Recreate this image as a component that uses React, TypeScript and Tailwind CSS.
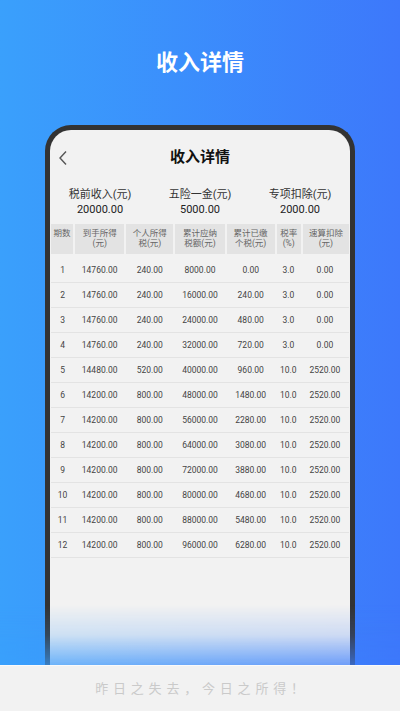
const rows = [
  ["1", "14760.00", "240.00", "8000.00", "0.00", "3.0", "0.00"],
  ["2", "14760.00", "240.00", "16000.00", "240.00", "3.0", "0.00"],
  ["3", "14760.00", "240.00", "24000.00", "480.00", "3.0", "0.00"],
  ["4", "14760.00", "240.00", "32000.00", "720.00", "3.0", "0.00"],
  ["5", "14480.00", "520.00", "40000.00", "960.00", "10.0", "2520.00"],
  ["6", "14200.00", "800.00", "48000.00", "1480.00", "10.0", "2520.00"],
  ["7", "14200.00", "800.00", "56000.00", "2280.00", "10.0", "2520.00"],
  ["8", "14200.00", "800.00", "64000.00", "3080.00", "10.0", "2520.00"],
  ["9", "14200.00", "800.00", "72000.00", "3880.00", "10.0", "2520.00"],
  ["10", "14200.00", "800.00", "80000.00", "4680.00", "10.0", "2520.00"],
  ["11", "14200.00", "800.00", "88000.00", "5480.00", "10.0", "2520.00"],
  ["12", "14200.00", "800.00", "96000.00", "6280.00", "10.0", "2520.00"],
];

const headers = [
  ["期数"],
  ["到手所得", "(元)"],
  ["个人所得", "税(元)"],
  ["累计应纳", "税额(元)"],
  ["累计已缴", "个税(元)"],
  ["税率", "(%)"],
  ["速算扣除", "(元)"],
];

const summary = [
  { label: "税前收入(元)", value: "20000.00" },
  { label: "五险一金(元)", value: "5000.00" },
  { label: "专项扣除(元)", value: "2000.00" },
];

const cols = "grid grid-cols-[23fr_51fr_49fr_51fr_50fr_25fr_48fr]";

export default function App() {
  return (
    <div className="relative flex h-[711px] w-full flex-col overflow-hidden bg-gradient-to-r from-[#3aa0fc] to-[#3d78fb] font-['Roboto','Noto_Sans_CJK_SC',sans-serif]">
      <h1 className="pt-[48px] text-center text-[22px] font-bold leading-[30px] text-white">收入详情</h1>

      <div className="mx-[45px] mt-[47px] flex min-h-0 flex-1 flex-col rounded-t-[26px] border-[5px] border-b-0 border-[#333333] bg-[#f2f2f2]">
        <div className="rounded-t-[21px]">
          <div className="relative flex h-[55px] items-center justify-center">
            <svg className="absolute left-[8px] top-[20px]" width="10" height="16" viewBox="0 0 10 16" fill="none">
              <path d="M8 1.5 L2 8 L8 14.5" stroke="#555" strokeWidth="1.4" />
            </svg>
            <span className="text-[15px] font-bold text-[#111]">收入详情</span>
          </div>

          <div className="mt-[2px] grid grid-cols-3">
            {summary.map((s) => (
              <div key={s.label} className="text-center text-[11px] leading-[15px] text-[#333]">
                <p>{s.label}</p>
                <p className="text-[#222]">{s.value}</p>
              </div>
            ))}
          </div>

          <div className="mt-[7px] px-[1px]">
            <div className={`${cols} h-[30px] gap-x-[2px]`}>
              {headers.map((h, i) => (
                <div key={i} className="flex flex-col items-center bg-[#e3e3e3] pt-[4px] text-[8.5px] leading-[10px] text-[#666]">
                  {h.map((t) => (
                    <span key={t}>{t}</span>
                  ))}
                </div>
              ))}
            </div>

            <div className="mt-[4px]">
              {rows.map((r) => (
                <div key={r[0]} className={`${cols} h-[25px] items-center border-b border-[#e3e3e3] text-[8.5px] text-[#444]`}>
                  {r.map((c, i) => (
                    <span key={i} className="text-center">{c}</span>
                  ))}
                </div>
              ))}
            </div>
          </div>
        </div>
      </div>

      <div className="pointer-events-none absolute inset-x-0 top-[605px] h-[60px] bg-gradient-to-r from-[#3aa0fc] to-[#3d78fb] [mask-image:linear-gradient(to_bottom,transparent,rgba(0,0,0,0.2)_50%,rgba(0,0,0,0.72))]" />

      <div className="z-10 flex h-[46px] items-center justify-center border-t border-[#fafafa] bg-[#f2f2f2]">
        <span className="pl-[4px] text-[13px] tracking-[4.8px] text-[#cacaca]">昨日之失去，今日之所得！</span>
      </div>
    </div>
  );
}
